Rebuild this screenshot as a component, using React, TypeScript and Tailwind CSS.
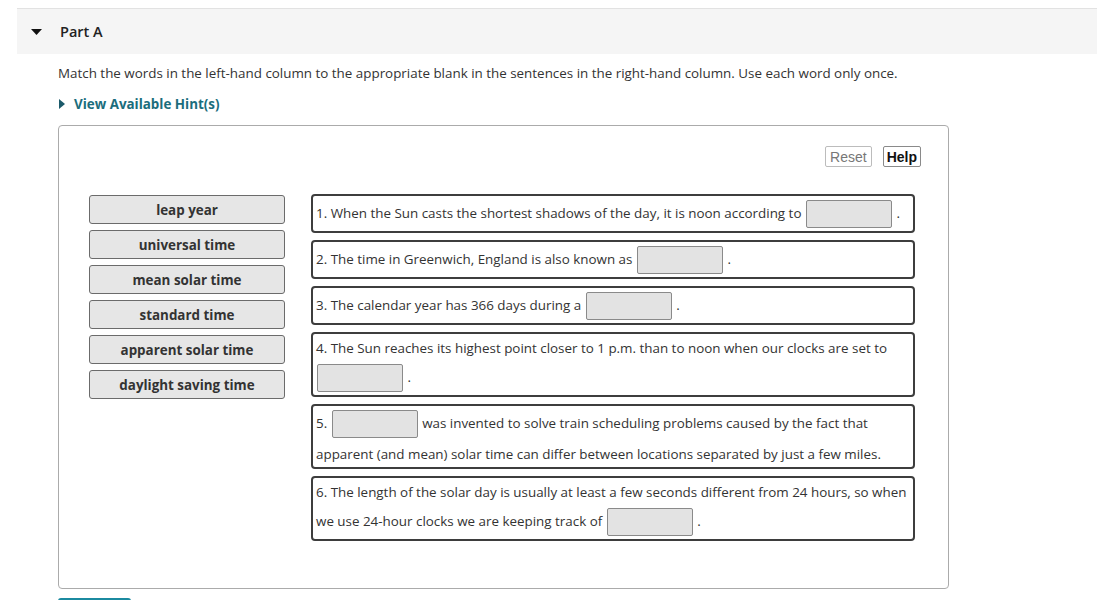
import type { ReactNode } from "react";

const words = [
  "leap year",
  "universal time",
  "mean solar time",
  "standard time",
  "apparent solar time",
  "daylight saving time",
];

function Blank() {
  return (
    <span className="mx-[1px] my-[3px] inline-block h-[28px] w-[86px] rounded-[2px] border border-[#8a8a8a] bg-[#e3e3e3] align-middle" />
  );
}

function Sentence({ children }: { children: ReactNode }) {
  return (
    <div className="rounded-[4px] border-2 border-[#3d3d3d] bg-white px-[3px] pt-[1px] text-[13.4px] leading-[26px] text-[#333]">
      {children}
    </div>
  );
}

export default function App() {
  return (
    <div
      className="min-h-[600px] bg-white pl-[17px] pt-[8px]"
      style={{ fontFamily: '"Open Sans", "Liberation Sans", sans-serif' }}
    >
      <div className="border-t border-[#e2e2e2]" />
      <div className="flex h-[45px] items-center bg-[#f5f5f5]">
        <svg width="11" height="6" viewBox="0 0 11 6" className="ml-[14px]">
          <path d="M0 0 L11 0 L5.5 6 Z" fill="#111" />
        </svg>
        <span className="ml-[18px] text-[14.5px] font-semibold text-[#222]">Part A</span>
      </div>

      <div className="pl-[41px]">
        <p className="mt-[10px] text-[13.4px] leading-[18px] text-[#333]">
          Match the words in the left-hand column to the appropriate blank in the sentences in the
          right-hand column. Use each word only once.
        </p>
        <div className="mt-[12px] flex items-center text-[13.4px] font-bold text-[#1b6d7c]">
          <svg width="6" height="10" viewBox="0 0 6 10" className="ml-[1px]">
            <path d="M0 0 L6 5 L0 10 Z" fill="#1b5a6a" />
          </svg>
          <span className="ml-[9px]">View Available Hint(s)</span>
        </div>

        <div className="mt-[11px] h-[464px] w-[891px] rounded-[4px] border border-[#ababab] bg-white">
          <div
            className="mr-[27px] mt-[20px] flex justify-end gap-[11px] text-[14px]"
            style={{ fontFamily: '"Liberation Sans", Arial, sans-serif' }}
          >
            <button className="h-[21px] rounded-[2px] border border-[#bcbcbc] bg-white px-[4px] leading-[18px] text-[#777]">
              Reset
            </button>
            <button className="h-[21px] rounded-[2px] border border-[#8a8a8a] bg-white px-[3px] font-bold leading-[18px] text-[#111]">
              Help
            </button>
          </div>

          <div className="ml-[30px] mt-[27px] flex gap-[26px]">
            <div className="flex w-[196px] flex-col gap-[6px] pt-[1px]">
              {words.map((w) => (
                <div
                  key={w}
                  className="flex h-[29px] items-center justify-center rounded-[3px] border border-[#6b6b6b] bg-[#e6e6e6] text-[13.4px] font-bold text-[#333]"
                >
                  {w}
                </div>
              ))}
            </div>

            <div className="flex w-[604px] flex-col gap-[7px] pt-[0px]">
              <Sentence>
                1. When the Sun casts the shortest shadows of the day, it is noon according to <Blank /> .
              </Sentence>
              <Sentence>
                2. The time in Greenwich, England is also known as <Blank /> .
              </Sentence>
              <Sentence>
                3. The calendar year has 366 days during a <Blank /> .
              </Sentence>
              <Sentence>
                4. The Sun reaches its highest point closer to 1 p.m. than to noon when our clocks are set to
                <br />
                <Blank /> .
              </Sentence>
              <Sentence>
                5. <Blank /> was invented to solve train scheduling problems caused by the fact that
                <br />
                apparent (and mean) solar time can differ between locations separated by just a few miles.
              </Sentence>
              <Sentence>
                6. The length of the solar day is usually at least a few seconds different from 24 hours, so when
                <br />
                we use 24-hour clocks we are keeping track of <Blank /> .
              </Sentence>
            </div>
          </div>
        </div>

        <div className="mt-[9px] h-[4px] w-[73px] rounded-t-[3px] border-t-2 border-[#1b8aa0]" />
      </div>
    </div>
  );
}
